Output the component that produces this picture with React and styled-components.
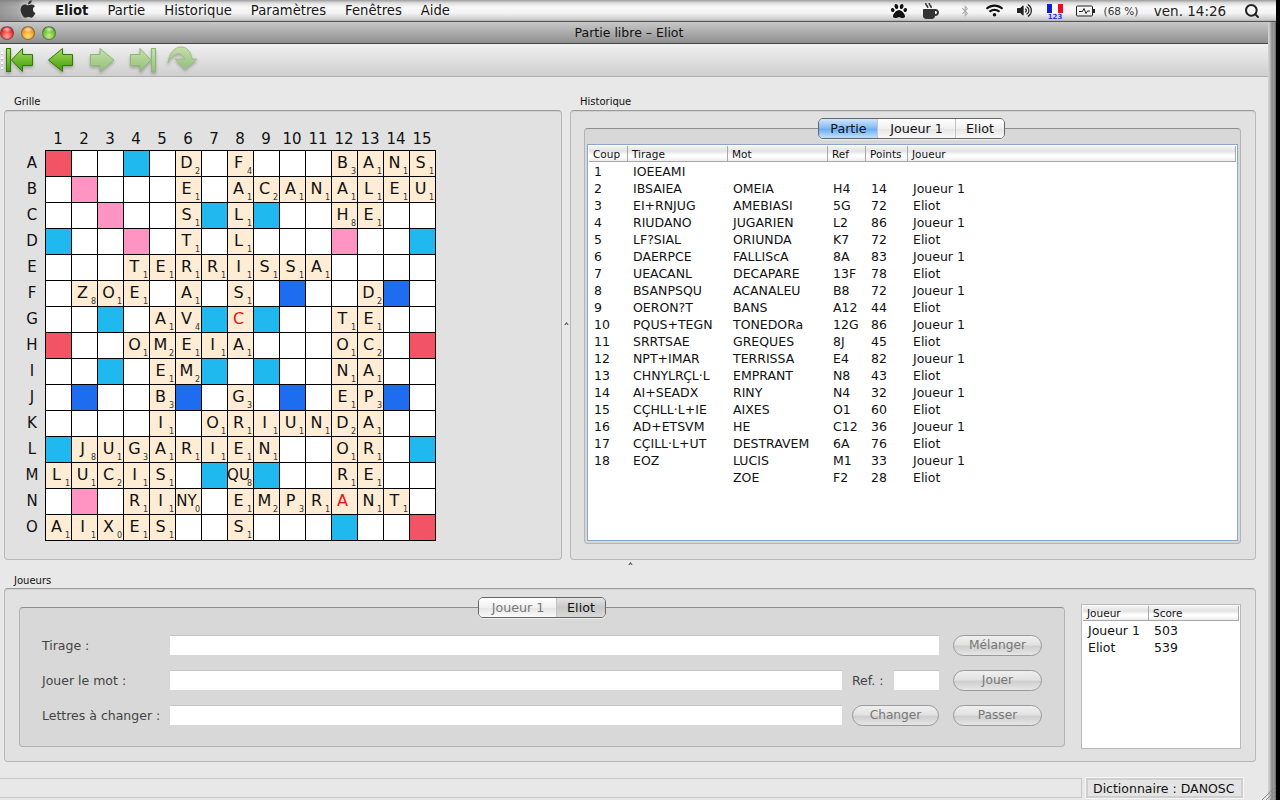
import React from "react";
import styled, { createGlobalStyle } from "styled-components";
import { FaApple, FaPaw, FaMugHot, FaBluetoothB, FaWifi, FaVolumeUp } from "react-icons/fa";
import { FiSearch } from "react-icons/fi";

const Global = createGlobalStyle`
  html, body { margin: 0; padding: 0; background: #000; overflow: hidden; }
  * { box-sizing: border-box; }
  body { font-family: "DejaVu Sans", "Liberation Sans", sans-serif; color: #111; }
`;

const Screen = styled.div`
  width: 1280px; height: 800px; display: flex; flex-direction: column; overflow: hidden; background: #000;
`;
const MenuBar = styled.div`
  width: 1276px; height: 22px; flex: none; display: flex; align-items: center; padding-right: 14px;
  border-bottom: 1px solid #555;
  background:
    linear-gradient(90deg, rgba(120,120,120,.75) 0, rgba(120,120,120,.6) 18px, rgba(120,120,120,0) 36px),
    linear-gradient(180deg, #9c9c9c 0, #dedede 3px, #f8f8f8 7px, #f4f4f4 13px, #c8c8c8 20px, #a8a8a8 21px);
`;
const AppleSlot = styled.div`
  width: 55px; height: 21px; display: flex; align-items: center; justify-content: flex-end; padding-right: 17px; color: #2e2e2e; font-size: 20px; margin-top: -3px;
`;
const MenuItem = styled.span`
  font-size: 13.2px; margin-right: 19px; color: #161616; font-weight: ${p => (p.$bold ? 700 : 400)};
`;
const Tray = styled.div`
  margin-left: auto; display: flex; align-items: center; height: 21px;
`;
const TraySlot = styled.div`
  width: ${p => p.$w}px; display: flex; justify-content: center; align-items: center; color: ${p => p.$c || "#222"};
  font-size: ${p => p.$f || 14}px; white-space: nowrap;
`;
const FlagBox = styled.div`
  display: flex; flex-direction: column; align-items: center; margin-top: 3px;
`;
const Flag = styled.div`
  width: 16px; height: 9px; background: linear-gradient(90deg, #1020c8 33%, #fff 33% 66%, #e8101c 66%);
`;
const FlagNum = styled.div`
  font-size: 7px; line-height: 8px; color: #2838e0; font-weight: 700;
`;

const Desk = styled.div`
  flex: 1; display: flex; min-height: 0;
`;
const Window = styled.div`
  width: 1268px; display: flex; flex-direction: column; background: #e8e8e8;
`;
const Strip = styled.div`
  position: relative; width: 8px;
  background: linear-gradient(90deg, #d8d8d8 0, #bdbdbd 2px, #8c8c8c 4px, #9a9a9a 6px, #666 8px);
`;
const TitleBar = styled.div`
  height: 22px; flex: none; display: flex; align-items: center; position: relative;
  border-bottom: 1px solid #444; background: linear-gradient(180deg, #c8c8c8, #8f8f8f);
  justify-content: center; padding-right: 10px; font-size: 12.5px; color: #111;
`;
const Lights = styled.div`
  position: absolute; left: 0; top: 4px; display: flex; gap: 7px;
`;
const Light = styled.div`
  width: 14px; height: 14px; border-radius: 50%; border: 1px solid rgba(70,70,70,.55);
  background:
    radial-gradient(ellipse 5px 3px at 50% 20%, rgba(255,255,255,.75), rgba(255,255,255,0) 100%),
    radial-gradient(circle at 50% 75%, ${p => p.$a} 0, ${p => p.$b} 55%, ${p => p.$c} 100%);
`;
const ToolBar = styled.div`
  height: 33px; flex: none; display: flex; align-items: center; padding-left: 5px; position: relative;
  border-bottom: 1px solid #adadad; background: linear-gradient(180deg, #f0f0f0, #cfcfcf);
`;
const Grip = styled.div`
  position: absolute; left: 1px; top: 8px; width: 2px; height: 20px;
  background: repeating-linear-gradient(180deg, #fff 0 2px, #bbb 2px 3px, transparent 3px 5px);
`;
const ToolSlot = styled.div`
  width: 40px; height: 32px; display: flex;
`;
const Main = styled.div`
  flex: 1; min-height: 0; padding: 18px 12px 0 4px; display: flex; flex-direction: column;
`;
const TopSplit = styled.div`
  display: grid; grid-template-columns: 558px 8px 686px; height: 465px; flex: none;
`;
const Section = styled.section`
  display: flex; flex-direction: column; min-width: 0; min-height: 0;
`;
const SectionLabel = styled.div`
  font-size: 10px; line-height: 13px; height: 15px; flex: none; padding-left: 10px; color: #111;
`;
const JoueursLabel = styled(SectionLabel)`
  height: 14px;
`;
const GroupBox = styled.div`
  flex: 1; min-height: 0; border: 1px solid #b8b8b8; border-top-color: #9c9c9c; border-radius: 4px; background: #e1e1e1;
  box-shadow: inset 0 1px 0 #d0d0d0;
`;
const VHandle = styled.div`
  display: flex; align-items: center; justify-content: center; padding-bottom: 9px;
`;
const HHandle = styled.div`
  height: 14px; flex: none; display: flex; justify-content: center; align-items: flex-start; padding-top: 2px;
`;

const BoardArea = styled.div`
  display: grid; grid-template-columns: 26px 391px; padding: 14px 0 0 14px; grid-template-rows: 25px 391px;
`;
const Corner = styled.div``;
const ColHeads = styled.div`
  display: grid; grid-template-columns: repeat(15, 26px); font-size: 15px; text-align: center; align-items: center; color: #111; padding-top: 2px;
`;
const RowHeads = styled.div`
  display: grid; grid-template-rows: repeat(15, 26px); font-size: 15px; text-align: center; align-items: center; color: #111; padding-bottom: 1px;
`;
const Board = styled.div`
  display: grid; grid-template-columns: repeat(15, 25px); grid-auto-rows: 25px; gap: 1px; padding: 1px; background: #000;
`;
const colors = { r: "#f25465", p: "#ff93c2", c: "#20b9ef", b: "#1e6cf0" };
const Cell = styled.div`
  position: relative; background: ${p => (p.$k ? colors[p.$k] : "#fff")};
`;
const Tile = styled.div`
  position: absolute; inset: 0; background: #ffecd4; display: flex; align-items: center; justify-content: center;
  font-size: ${p => (p.$small ? 15 : 16)}px; padding-right: 4px; padding-bottom: 2px; color: ${p => (p.$red ? "#f01010" : "#111")};
`;
const Score = styled.span`
  position: absolute; right: 1px; bottom: -1px; font-size: 8px; line-height: 10px; color: #333;
`;

const TabPane = styled.div`
  position: relative; border: 1px solid #b4b4b4; border-top-color: #8e8e8e; border-radius: 4px; background: #d8d8d8;
`;
const TabStrip = styled.div`
  position: absolute; left: ${p => p.$x}px; top: -11px; height: 21px; display: flex; border: 1px solid #666; border-radius: 5px; overflow: hidden;
  box-shadow: 0 1px 0 rgba(255,255,255,.6);
`;
const Tab = styled.div`
  width: ${p => p.$w}px; display: flex; align-items: center; justify-content: center; font-size: 12.7px;
  border-left: 1px solid ${p => (p.$first ? "transparent" : "#c4c4c4")};
  color: ${p => (p.$dim ? "#777" : "#111")};
  background: ${p =>
    p.$on
      ? "linear-gradient(180deg, #d0e6fb 0, #88bdf4 45%, #6eaff2 55%, #c4e2fe 100%)"
      : p.$dark
      ? "linear-gradient(180deg, #e4e4e4, #c8c8c8 50%, #dadada)"
      : "linear-gradient(180deg, #fff, #f0f0f0 50%, #e6e6e6 55%, #fafafa)"};
`;
const HistPane = styled(TabPane)`
  margin: 17px 14px 15px 13px; height: 416px; padding: 15px 2px 1px 2px;
`;
const TableFrame = styled.div`
  height: 397px; border: 1px solid #8aa6cc; background: #fff; padding: 1px;
`;
const Row = styled.div`
  display: grid; grid-template-columns: ${p => p.$cols};
`;
const HeadRow = styled(Row)`
  height: 16px; border-bottom: 1px solid #a8a8a8;
  background: linear-gradient(180deg, #f4f4f4 0, #e2e2e2 35%, #fefefe 60%, #fff 70%, #ececec 100%);
`;
const ScoreHeadRow = styled(HeadRow)`
  height: 15px;
`;
const HeadCell = styled.div`
  font-size: 10.5px; line-height: 17px; height: 15px; padding-left: 4px; color: #111; border-right: 1px solid #a8a8a8; white-space: nowrap;
`;
const ScoreHeadCell = styled(HeadCell)`
  line-height: 15px; height: 14px;
`;
const DataRow = styled(Row)`
  height: 17px;
`;
const DataCell = styled.div`
  font-size: 12.5px; line-height: 19px; height: 17px; padding-left: 5px; color: #111; white-space: nowrap;
`;

const JoueursBox = styled(GroupBox)`
  display: flex; padding: 18px 14px 14px 14px; gap: 16px; height: 174px; flex: none;
`;
const FormPane = styled(TabPane)`
  flex: 1; padding: 27px 22px 0 22px; display: flex; flex-direction: column; gap: 15px;
`;
const FormRow = styled.div`
  display: flex; align-items: center; height: 20px;
`;
const FieldLabel = styled.div`
  width: ${p => p.$w || 127}px; flex: none; font-size: 12.5px; color: #444; white-space: nowrap; padding-left: ${p => p.$pl || 0}px;
`;
const Field = styled.div`
  flex: ${p => (p.$w ? "none" : 1)}; width: ${p => (p.$w ? p.$w + "px" : "auto")}; height: 20px; background: #fff;
  border-top: 1px solid #c6c6c6;
`;
const Pill = styled.div`
  flex: none; width: ${p => p.$w}px; height: 21px; border-radius: 11px; border: 1px solid #9a9a9a; margin-left: ${p => p.$ml || 14}px;
  display: flex; align-items: center; justify-content: center; font-size: 12.2px; color: #777;
  background: linear-gradient(180deg, #f0f0f0 0, #e2e2e2 45%, #cfcfcf 55%, #e6e6e6 100%);
`;
const ScoreFrame = styled.div`
  width: 160px; flex: none; border: 1px solid #b8b8b8; background: #fff; padding: 1px 1px 0 1px; height: 145px; margin-top: -3px;
`;
const StatusBar = styled.div`
  display: flex; height: 20px; margin: 16px -12px 0 -4px; padding-right: 25px; gap: 4px; flex: none;
`;
const StatusLeft = styled.div`
  flex: 1; border: 1px solid #c8c8c8; border-left: none; background: #e8e8e8;
`;
const StatusRight = styled.div`
  width: 157px; flex: none; border: 2px solid #cfcfcf; outline: 1px solid #f6f6f6; background: #e4e4e4;
  font-size: 12.5px; line-height: 17px; padding-left: 5px; color: #111; white-space: nowrap;
`;
const ResizeGrip = styled.svg`
  position: absolute; left: -7px; bottom: 0; width: 15px; height: 15px;
`;

const B = [
  "r..c.D2.F4...B3A1N1S1",
  ".p...E1.A1C2A1N1A1L1E1U1",
  "..p..S1cL1c..H8E1..",
  "c..p.T1.L1...p..c",
  "...T1E1R1R1I1S1S1A1....",
  ".Z8O1E1.A1.S1.b..D2b.",
  "..c.A1V4cC!c..T1E1..",
  "r..O1M2E1I1A1...O1C2.r",
  "..c.E1M2c.c..N1A1..",
  ".b..B3b.G3.b.E1P3b.",
  "....I1.O1R1I1U1N1D2A1..",
  "cJ8U1G3A1R1I1E1N1..O1R1.c",
  "L1U1C2I1S1.cQU8c..R1E1..",
  ".p.R1I1NY0.E1M2P3R1A!N1T1.",
  "A1I1X0E1S1..S1...c..r",
];
function parseRow(s) {
  const out = [];
  let i = 0;
  while (i < s.length) {
    const ch = s[i];
    if (ch === ".") { out.push({}); i++; }
    else if ("rpcb".includes(ch)) { out.push({ k: ch }); i++; }
    else {
      let l = ch; i++;
      if ((l === "Q" && s[i] === "U") || (l === "N" && s[i] === "Y")) { l += s[i]; i++; }
      const v = s[i]; i++;
      out.push(v === "!" ? { l, red: true } : { l, v });
    }
  }
  return out;
}
const HIST = [
  ["1","IOEEAMI","","","",""],["2","IBSAIEA","OMEIA","H4","14","Joueur 1"],["3","EI+RNJUG","AMEBIASI","5G","72","Eliot"],
  ["4","RIUDANO","JUGARIEN","L2","86","Joueur 1"],["5","LF?SIAL","ORIUNDA","K7","72","Eliot"],["6","DAERPCE","FALLIScA","8A","83","Joueur 1"],
  ["7","UEACANL","DECAPARE","13F","78","Eliot"],["8","BSANPSQU","ACANALEU","B8","72","Joueur 1"],["9","OERON?T","BANS","A12","44","Eliot"],
  ["10","PQUS+TEGN","TONEDORa","12G","86","Joueur 1"],["11","SRRTSAE","GREQUES","8J","45","Eliot"],["12","NPT+IMAR","TERRISSA","E4","82","Joueur 1"],
  ["13","CHNYLRÇL·L","EMPRANT","N8","43","Eliot"],["14","AI+SEADX","RINY","N4","32","Joueur 1"],["15","CÇHLL·L+IE","AIXES","O1","60","Eliot"],
  ["16","AD+ETSVM","HE","C12","36","Joueur 1"],["17","CÇILL·L+UT","DESTRAVEM","6A","76","Eliot"],["18","EOZ","LUCIS","M1","33","Joueur 1"],
  ["","","ZOE","F2","28","Eliot"],
];
const HIST_COLS = "39px 100px 100px 38px 42px 1fr";
const HEADS = ["Coup","Tirage","Mot","Ref","Points","Joueur"];

const grad = (id, a, b) => (
  <linearGradient id={id} x1="0" y1="0" x2="0" y2="1"><stop offset="0" stopColor={a} /><stop offset="1" stopColor={b} /></linearGradient>
);
const Defs = () => (
  <defs>
    {grad("on", "#a6dd5c", "#3f9a08")}
    {grad("off", "#c6e0a8", "#92c07a")}
  </defs>
);
const Soft = { filter: "drop-shadow(0 2px 1.5px rgba(0,0,0,.25))" };
const IconFirst = () => (
  <svg width="34" height="32" style={Soft}><Defs />
    <rect x="1.5" y="4.5" width="4" height="23" fill="url(#on)" stroke="#2f7a06" />
    <path d="M6.5 16 L17.5 4.5 V10.5 H27.5 V21.5 H17.5 V27.5 Z" fill="url(#on)" stroke="#2f7a06" />
  </svg>
);
const IconPrev = () => (
  <svg width="34" height="32" style={Soft}><Defs />
    <path d="M3.5 16 L17.5 4.5 V10.5 H27.5 V21.5 H17.5 V27.5 Z" fill="url(#on)" stroke="#2f7a06" />
  </svg>
);
const IconNext = () => (
  <svg width="34" height="32" style={Soft}><Defs />
    <path d="M29 16 L15 4.5 V10.5 H5.5 V21.5 H15 V27.5 Z" fill="url(#off)" stroke="#8fb878" />
  </svg>
);
const IconLast = () => (
  <svg width="34" height="32" style={Soft}><Defs />
    <path d="M26 16 L15 4.5 V10.5 H5.5 V21.5 H15 V27.5 Z" fill="url(#off)" stroke="#8fb878" />
    <rect x="26.5" y="4.5" width="4" height="23" fill="url(#off)" stroke="#8fb878" />
  </svg>
);
const IconRedo = () => (
  <svg width="34" height="32" style={Soft}><Defs />
    <path d="M3 19 C4 9 10 3 16 3 C22 3 26 8 27 15 H32 L20 25 L10 15 H20 C18 11 15 9 12 10 C8 11 5 14 3 19 Z" fill="url(#off)" stroke="#9cc084" />
  </svg>
);
const Battery = () => (
  <svg width="20" height="12" viewBox="0 0 20 12">
    <rect x=".5" y="1" width="16" height="10" rx="1" fill="none" stroke="#222" />
    <rect x="17" y="4" width="2" height="4" fill="#222" />
    <path d="M3 6.5 H6.5 L8 3.5 L10 8.5 L11.5 6 H14" fill="none" stroke="#222" />
  </svg>
);
const Caret = () => (
  <svg width="5" height="3" viewBox="0 0 6 4"><path d="M0 4 L3 0 L6 4 L4.5 4 L3 2.5 L1.5 4 Z" fill="#555" /></svg>
);

export default function App() {
  return (
    <Screen>
      <Global />
      <MenuBar>
        <AppleSlot><FaApple /></AppleSlot>
        <MenuItem $bold>Eliot</MenuItem>
        <MenuItem>Partie</MenuItem>
        <MenuItem>Historique</MenuItem>
        <MenuItem>Paramètres</MenuItem>
        <MenuItem>Fenêtres</MenuItem>
        <MenuItem>Aide</MenuItem>
        <Tray>
          <TraySlot $w={32} $f={16} $c="#111"><FaPaw /></TraySlot>
          <TraySlot $w={32} $f={16} $c="#333"><FaMugHot /></TraySlot>
          <TraySlot $w={36} $f={12} $c="#aaa"><FaBluetoothB /></TraySlot>
          <TraySlot $w={22} $f={17} $c="#111"><FaWifi /></TraySlot>
          <TraySlot $w={38} $f={15} $c="#222"><FaVolumeUp /></TraySlot>
          <TraySlot $w={24}><FlagBox><Flag /><FlagNum>123</FlagNum></FlagBox></TraySlot>
          <TraySlot $w={37}><Battery /></TraySlot>
          <TraySlot $w={34} $f={10.5} $c="#333">(68 %)</TraySlot>
          <TraySlot $w={104} $f={13.5} $c="#222">ven. 14:26</TraySlot>
          <TraySlot $w={20} $f={16} $c="#222"><FiSearch strokeWidth={3} /></TraySlot>
        </Tray>
      </MenuBar>
      <Desk>
        <Window>
          <TitleBar>
            <Lights>
              <Light $a="#ffb0a8" $b="#ee3030" $c="#a80c10" />
              <Light $a="#ffe080" $b="#f0a020" $c="#c06808" />
              <Light $a="#c8f090" $b="#70c030" $c="#3c8a10" />
            </Lights>
            Partie libre – Eliot
          </TitleBar>
          <ToolBar>
            <Grip />
            <ToolSlot><IconFirst /></ToolSlot>
            <ToolSlot><IconPrev /></ToolSlot>
            <ToolSlot><IconNext /></ToolSlot>
            <ToolSlot><IconLast /></ToolSlot>
            <ToolSlot><IconRedo /></ToolSlot>
          </ToolBar>
          <Main>
            <TopSplit>
              <Section>
                <SectionLabel>Grille</SectionLabel>
                <GroupBox>
                  <BoardArea>
                    <Corner />
                    <ColHeads>{Array.from({ length: 15 }, (_, i) => <span key={i}>{i + 1}</span>)}</ColHeads>
                    <RowHeads>{"ABCDEFGHIJKLMNO".split("").map(c => <span key={c}>{c}</span>)}</RowHeads>
                    <Board>
                      {B.flatMap((r, y) =>
                        parseRow(r).map((c, x) => (
                          <Cell key={y + "-" + x} $k={c.k}>
                            {c.l && (
                              <Tile $red={c.red} $small={c.l.length > 1}>
                                {c.l}
                                {c.v && <Score>{c.v}</Score>}
                              </Tile>
                            )}
                          </Cell>
                        ))
                      )}
                    </Board>
                  </BoardArea>
                </GroupBox>
              </Section>
              <VHandle><Caret /></VHandle>
              <Section>
                <SectionLabel>Historique</SectionLabel>
                <GroupBox>
                  <HistPane>
                    <TabStrip $x={233}>
                      <Tab $w={58} $on $first>Partie</Tab>
                      <Tab $w={78}>Joueur 1</Tab>
                      <Tab $w={49}>Eliot</Tab>
                    </TabStrip>
                    <TableFrame>
                      <HeadRow $cols={HIST_COLS}>
                        {HEADS.map(h => <HeadCell key={h}>{h}</HeadCell>)}
                      </HeadRow>
                      {HIST.map((r, i) => (
                        <DataRow key={i} $cols={HIST_COLS}>
                          {r.map((c, j) => <DataCell key={j}>{c}</DataCell>)}
                        </DataRow>
                      ))}
                    </TableFrame>
                  </HistPane>
                </GroupBox>
              </Section>
            </TopSplit>
            <HHandle><Caret /></HHandle>
            <JoueursLabel>Joueurs</JoueursLabel>
            <JoueursBox>
              <FormPane>
                <TabStrip $x={458}>
                  <Tab $w={77} $first $dim>Joueur 1</Tab>
                  <Tab $w={49} $dark>Eliot</Tab>
                </TabStrip>
                <FormRow>
                  <FieldLabel $w={128}>Tirage :</FieldLabel>
                  <Field />
                  <Pill $w={89}>Mélanger</Pill>
                </FormRow>
                <FormRow>
                  <FieldLabel $w={128}>Jouer le mot :</FieldLabel>
                  <Field />
                  <FieldLabel $w={52} $pl={10}>Ref. :</FieldLabel>
                  <Field $w={45} />
                  <Pill $w={89}>Jouer</Pill>
                </FormRow>
                <FormRow>
                  <FieldLabel $w={128}>Lettres à changer :</FieldLabel>
                  <Field />
                  <Pill $w={87} $ml={10}>Changer</Pill>
                  <Pill $w={89}>Passer</Pill>
                </FormRow>
              </FormPane>
              <ScoreFrame>
                <ScoreHeadRow $cols="66px 1fr">
                  <ScoreHeadCell>Joueur</ScoreHeadCell>
                  <ScoreHeadCell>Score</ScoreHeadCell>
                </ScoreHeadRow>
                <DataRow $cols="66px 1fr"><DataCell>Joueur 1</DataCell><DataCell>503</DataCell></DataRow>
                <DataRow $cols="66px 1fr"><DataCell>Eliot</DataCell><DataCell>539</DataCell></DataRow>
              </ScoreFrame>
            </JoueursBox>
            <StatusBar>
              <StatusLeft />
              <StatusRight>Dictionnaire : DANOSC</StatusRight>
            </StatusBar>
          </Main>
        </Window>
        <Strip>
          <ResizeGrip viewBox="0 0 15 15">
            <path d="M1 15 L15 1 M5 15 L15 5 M9 15 L15 9 M13 15 L15 13" stroke="#888" strokeWidth="1" />
          </ResizeGrip>
        </Strip>
      </Desk>
    </Screen>
  );
}
